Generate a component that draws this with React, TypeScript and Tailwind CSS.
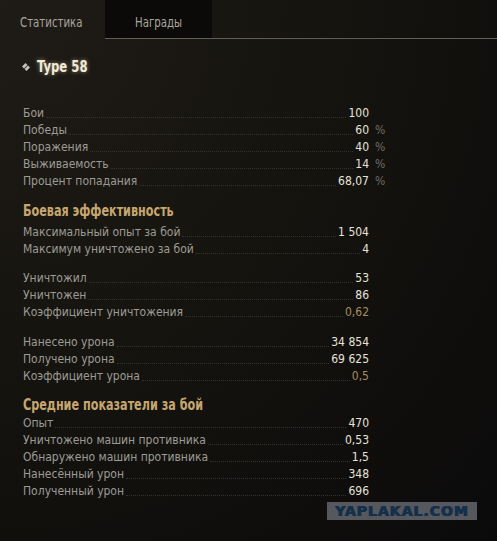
import React from 'react';

type Row = { label: string; value: string; pct?: boolean; ratio?: boolean };

const overall: Row[] = [
  { label: 'Бои', value: '100' },
  { label: 'Победы', value: '60', pct: true },
  { label: 'Поражения', value: '40', pct: true },
  { label: 'Выживаемость', value: '14', pct: true },
  { label: 'Процент попадания', value: '68,07', pct: true },
];

const maxGroup: Row[] = [
  { label: 'Максимальный опыт за бой', value: '1 504' },
  { label: 'Максимум уничтожено за бой', value: '4' },
];

const killGroup: Row[] = [
  { label: 'Уничтожил', value: '53' },
  { label: 'Уничтожен', value: '86' },
  { label: 'Коэффициент уничтожения', value: '0,62', ratio: true },
];

const damageGroup: Row[] = [
  { label: 'Нанесено урона', value: '34 854' },
  { label: 'Получено урона', value: '69 625' },
  { label: 'Коэффициент урона', value: '0,5', ratio: true },
];

const avgGroup: Row[] = [
  { label: 'Опыт', value: '470' },
  { label: 'Уничтожено машин противника', value: '0,53' },
  { label: 'Обнаружено машин противника', value: '1,5' },
  { label: 'Нанесённый урон', value: '348' },
  { label: 'Полученный урон', value: '696' },
];

const narrow = { fontFamily: '"DejaVu Sans Condensed", "DejaVu Sans", sans-serif' };

const StatRow: React.FC<{ row: Row }> = ({ row }) => (
  <div className="flex items-end h-[17px] text-[12px] leading-[17px]">
    <span className="text-[#9d9b95] whitespace-nowrap">{row.label}</span>
    <span className="flex-1 mx-[2px] mb-[4px] border-b border-dotted border-[#34322e]" />
    <span className={`${row.ratio ? 'text-[#a58d5c]' : 'text-[#e6e3da]'} whitespace-nowrap`}>{row.value}</span>
    <span className="w-[17px] pl-[6px] text-[#6f6d68]">{row.pct ? '%' : ''}</span>
  </div>
);

const Group: React.FC<{ rows: Row[] }> = ({ rows }) => (
  <div className="flex flex-col">
    {rows.map((r) => (
      <StatRow key={r.label} row={r} />
    ))}
  </div>
);

const Heading: React.FC<{ children: React.ReactNode }> = ({ children }) => (
  <h2 className="h-[20px] text-[15px] leading-[20px] font-bold text-[#c6a66f] whitespace-nowrap origin-left scale-x-[0.83]">
    {children}
  </h2>
);

export default function App() {
  return (
    <div
      className="relative w-[497px] h-[541px] overflow-hidden bg-[radial-gradient(ellipse_at_top_left,#1f1c17_0%,#16140f_45%,#0b0a0b_100%)]"
      style={narrow}
    >
      {/* tabs */}
      <div className="flex h-[39px]">
        <div className="w-[105px] pl-[20px] pt-[12px] text-[14px] text-[#a9a69f]">
          <span className="inline-block origin-left scale-x-[0.81]">Статистика</span>
        </div>
        <div className="w-[107px] bg-[#0b0a08] border-b border-[#625e57] pl-[30px] pt-[12px] text-[14px] text-[#a9a69f]">
          <span className="inline-block origin-left scale-x-[0.81]">Награды</span>
        </div>
        <div className="flex-1 border-b border-[#625e57]" />
      </div>

      {/* vehicle name */}
      <div className="flex items-center gap-[7px] pl-[22px] mt-[19px] h-[18px]">
        <svg width="8" height="8" viewBox="0 0 8 8">
          <path d="M3.5 0 L5.5 2 L2 5.5 L0 3.5 Z" fill="#c4c1ba" />
          <path d="M6 2.5 L8 4.5 L4.5 8 L2.5 6 Z" fill="#c4c1ba" />
        </svg>
        <span className="inline-block origin-left scale-x-[0.81] text-[16px] font-bold text-[#f1ead6] [text-shadow:0_0_5px_rgba(255,240,200,0.5)]">
          Type 58
        </span>
      </div>

      <div className="w-[363px] ml-[23px] mt-[29px] flex flex-col">
        <Group rows={overall} />
        <div className="mt-[11px] mb-[3px]">
          <Heading>Боевая эффективность</Heading>
        </div>
        <Group rows={maxGroup} />
        <div className="mt-[12px]">
          <Group rows={killGroup} />
        </div>
        <div className="mt-[13px]">
          <Group rows={damageGroup} />
        </div>
        <div className="mt-[10px]">
          <Heading>Средние показатели за бой</Heading>
        </div>
        <Group rows={avgGroup} />
      </div>

      {/* watermark */}
      <div className="absolute left-[327px] top-[502px] w-[150px] h-[18px] bg-[#56585d] flex items-center justify-center">
        <span
          className="text-[14px] font-bold tracking-[1px] text-[#14304a] leading-none [text-shadow:0.5px_0_0_#14304a,-0.5px_0_0_#14304a]"
          style={{ fontFamily: '"DejaVu Sans", sans-serif' }}
        >
          YAPLAKAL.COM
        </span>
      </div>
    </div>
  );
}
